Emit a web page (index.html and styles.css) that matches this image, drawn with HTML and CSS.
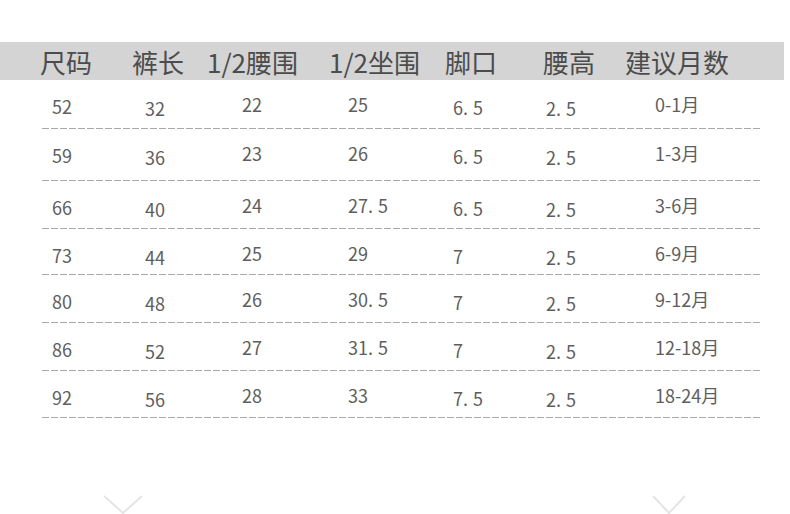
FILE: index.html
```html
<!DOCTYPE html>
<html lang="zh-CN">
<head>
<meta charset="utf-8">
<title>尺码表</title>
<link rel="stylesheet" href="styles.css">
</head>
<body>
<div class="page">
  <div class="head-bar">
    <div class="head">
      <span>尺码</span><span>裤长</span><span>1/2腰围</span><span>1/2坐围</span><span>脚口</span><span>腰高</span><span>建议月数</span>
    </div>
  </div>
  <div class="table">
    <div class="row r1"><span>52</span><span>32</span><span>22</span><span>25</span><span>6<i class="dot">.</i>5</span><span>2<i class="dot">.</i>5</span><span>0-1月</span></div>
    <div class="row r2"><span>59</span><span>36</span><span>23</span><span>26</span><span>6<i class="dot">.</i>5</span><span>2<i class="dot">.</i>5</span><span>1-3月</span></div>
    <div class="row r3"><span>66</span><span>40</span><span>24</span><span>27<i class="dot">.</i>5</span><span>6<i class="dot">.</i>5</span><span>2<i class="dot">.</i>5</span><span>3-6月</span></div>
    <div class="row r4"><span>73</span><span>44</span><span>25</span><span>29</span><span>7</span><span>2<i class="dot">.</i>5</span><span>6-9月</span></div>
    <div class="row r5"><span>80</span><span>48</span><span>26</span><span>30<i class="dot">.</i>5</span><span>7</span><span>2<i class="dot">.</i>5</span><span>9-12月</span></div>
    <div class="row r6"><span>86</span><span>52</span><span>27</span><span>31<i class="dot">.</i>5</span><span>7</span><span>2<i class="dot">.</i>5</span><span>12-18月</span></div>
    <div class="row r7"><span>92</span><span>56</span><span>28</span><span>33</span><span>7<i class="dot">.</i>5</span><span>2<i class="dot">.</i>5</span><span>18-24月</span></div>
  </div>
  <div class="footer">
    <svg class="chev chev-a" width="40" height="20" viewBox="0 0 40 20"><polyline points="1,1 20,18 39,1" fill="none" stroke="#e4e4e4" stroke-width="2"/></svg>
    <svg class="chev chev-b" width="34" height="20" viewBox="0 0 34 20"><polyline points="1,1 17,18 33,1" fill="none" stroke="#e4e4e4" stroke-width="2"/></svg>
  </div>
</div>
</body>
</html>
```
FILE: styles.css
```css
html, body {
  margin: 0;
  padding: 0;
  background: #ffffff;
  overflow: hidden;
}
.page {
  width: 790px;
  height: 514px;
  padding-top: 42px;
  box-sizing: border-box;
  font-family: "Noto Sans CJK SC", "Noto Sans", sans-serif;
}
.head-bar {
  width: 784px;
  height: 38px;
  background: #d4d4d4;
}
.head {
  display: grid;
  grid-template-columns: 92px 75px 122px 116px 98px 82px 1fr;
  padding-left: 40px;
  font-size: 26px;
  line-height: 38px;
  color: #4c4c4c;
  padding-top: 1px;
  white-space: nowrap;
}
.table {
  margin-left: 42px;
  width: 718px;
}
.row {
  display: grid;
  grid-template-columns: 93px 97px 106px 105px 93px 109px 1fr;
  padding-left: 10px;
  font-size: 18px;
  line-height: 24px;
  color: #5e5e5e;
  box-sizing: border-box;
  background-image: repeating-linear-gradient(to right, #a9a9a9 0 7px, transparent 7px 9px);
  background-size: 100% 1px;
  background-position: left bottom;
  background-repeat: no-repeat;
}
.row > span { padding-top: 14px; white-space: nowrap; }
.row > span:nth-child(2) { padding-top: 16px; }
.row > span:nth-child(3),
.row > span:nth-child(4),
.row > span:nth-child(7) { padding-top: 12px; }
.row > span:nth-child(5) { padding-top: 15px; }
.row > span:nth-child(6) { padding-top: 16px; }
.dot { font-style: normal; margin-right: 5px; }
.r1 { height: 49px; }
.r2 { height: 52px; }
.r3 { height: 48px; }
.r4 { height: 46px; }
.r5 { height: 48px; }
.r6 { height: 48px; }
.r7 { height: 47px; }
.footer {
  display: flex;
  margin-top: 77px;
  padding-left: 103px;
}
.chev { display: block; }
.chev-b { margin-left: 509px; }
```
